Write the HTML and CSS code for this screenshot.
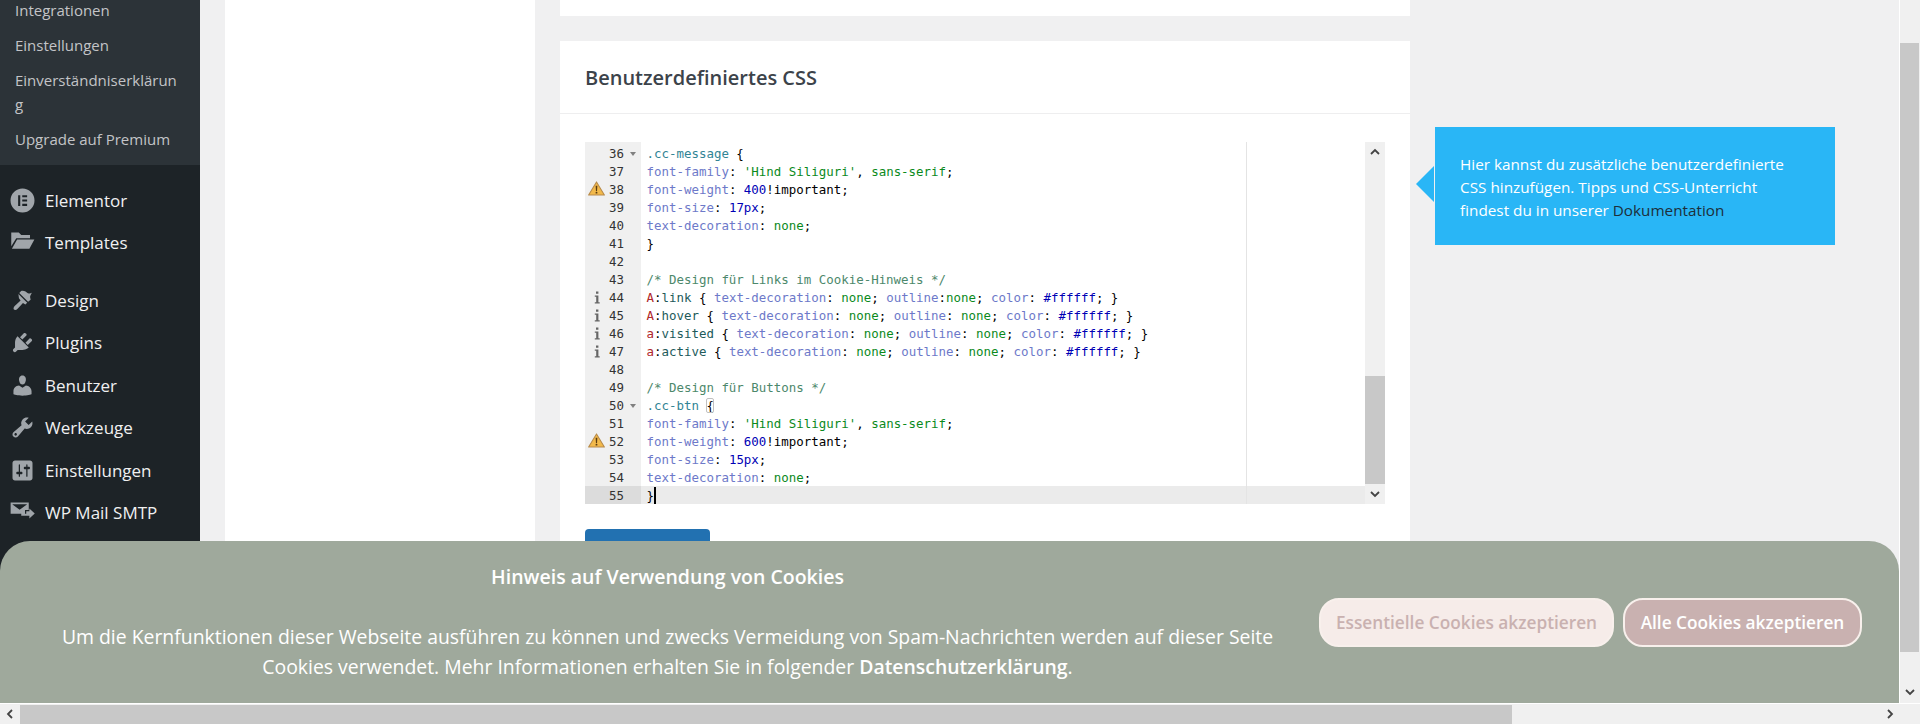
FILE: index.html
```html
<!DOCTYPE html>
<html lang="de">
<head>
  <meta charset="UTF-8">
  <title>Benutzerdefiniertes CSS</title>
  <link rel="stylesheet" href="styles.css">
</head>
<body>
  <div class="fenster">
    <div class="oben">
      <div class="haupt">
        <nav class="sidebar">
          <ul class="submenu">
            <li>Integrationen</li>
            <li>Einstellungen</li>
            <li class="umbruch">Einverständniserklärung</li>
            <li>Upgrade auf Premium</li>
          </ul>
          <ul class="menu menu-erste">
            <li>
              <svg viewBox="0 0 20 20"><path fill-rule="evenodd" d="M10 .4a9.6 9.6 0 1 0 0 19.200a9.600 9.600 0 0 0 0-19.200zM6.500 5.700h1.700v8.600H6.500zM9.800 5.700h3.900v1.700H9.800zM9.800 9.150h3.900v1.700H9.800zM9.800 12.600h3.900v1.700H9.800z"/></svg>
              Elementor
            </li>
            <li>
              <svg viewBox="0 0 20 20"><path d="M1 2h6l2 2h7v2.500H5L1 13zM5.700 7.500H19.500L15.500 15H1.500z"/></svg>
              Templates
            </li>
          </ul>
          <ul class="menu">
            <li>
              <svg viewBox="0 0 20 20"><path d="M14.480 11.060L7.410 3.990l1.500-1.500c.5-.56 2.300-.47 3.510.32 1.210.8 1.430 1.280 2.660 1.550 1.240.27 2.410-.48 2.410-.48s-.9 1.600-1.300 2.500c-.4 1 .3 1.900.3 3.100zM6.700 4.700l7.070 7.070-1.500 1.500-1.900-1.300-4.300 4.700c-.9 1-2.300 1.200-2.900.6-.6-.6-.4-2 .6-2.900l4.700-4.300-1.300-1.900z"/></svg>
              Design
            </li>
            <li>
              <svg viewBox="0 0 20 20"><path d="M13.110 4.360L9.870 7.600 8 5.730l3.240-3.240c.35-.34 1.050-.2 1.560.32.52.51.66 1.210.31 1.550zm-8 1.770l.91-1.120 9.010 9.010-1.190.84c-.71.71-2.630 1.160-3.820 1.160H6.140L4.900 17.260c-.59.59-1.540.59-2.120 0-.59-.58-.59-1.530 0-2.120l1.240-1.240v-3.880c0-1.130.4-3.190 1.090-3.890zm7.260 3.970l3.240-3.240c.34-.35 1.040-.21 1.550.31.52.51.66 1.210.31 1.550l-3.240 3.250z"/></svg>
              Plugins
            </li>
            <li>
              <svg viewBox="0 0 20 20"><path d="M10 9.250c-2.270 0-2.730-3.440-2.730-3.440C7 4.020 7.820 2 9.970 2c2.160 0 2.980 2.020 2.710 3.810 0 0-.41 3.440-2.680 3.440zm0 2.570L12.720 10c2.390 0 4.520 2.330 4.520 4.530v2.490s-3.650 1.130-7.240 1.130c-3.650 0-7.240-1.130-7.240-1.130v-2.490c0-2.250 1.940-4.480 4.470-4.480z"/></svg>
              Benutzer
            </li>
            <li>
              <svg viewBox="0 0 20 20"><path d="M16.680 9.770c-1.340 1.340-3.300 1.670-4.950.99l-5.410 6.520c-.99.99-2.590.99-3.580 0s-.99-2.590 0-3.570l6.520-5.420c-.68-1.650-.35-3.610.99-4.950 1.280-1.280 3.120-1.620 4.720-1.060l-2.890 2.890 2.820 2.820 2.860-2.870c.53 1.580.18 3.390-1.080 4.650zM3.810 16.210c.4.39 1.040.39 1.430 0 .4-.4.4-1.040 0-1.430-.39-.4-1.030-.4-1.430 0-.39.39-.39 1.030 0 1.430z"/></svg>
              Werkzeuge
            </li>
            <li>
              <svg viewBox="0 0 20 20"><path d="M18 16V4c0-1.100-.9-2-2-2H4c-1.100 0-2 .9-2 2v12c0 1.100.9 2 2 2h12c1.100 0 2-.9 2-2zM8 11h1c.55 0 1 .45 1 1s-.45 1-1 1H8v1.500c0 .28-.22.5-.5.5s-.5-.22-.5-.5V13H6c-.55 0-1-.45-1-1s.45-1 1-1h1V5.500c0-.28.22-.5.5-.5s.5.22.5.5V11zm5-2h-1c-.55 0-1-.45-1-1s.45-1 1-1h1V5.500c0-.28.22-.5.5-.5s.5.22.5.5V7h1c.55 0 1 .45 1 1s-.45 1-1 1h-1v5.500c0 .28-.22.5-.5.5s-.5-.22-.5-.5V9z"/></svg>
              Einstellungen
            </li>
            <li>
              <svg viewBox="0 0 20 20"><path fill-rule="evenodd" d="M.5 2h14.500v6h-3v3H.5zM2 3.500l5.700 4.200 5.800-4.200v-.2H2zM13 9h2.500V6.800l4.300 4-4.300 4v-2.300H9V11h4z"/></svg>
              WP Mail SMTP
            </li>
          </ul>
        </nav>

        <div class="panel"></div>

        <div class="inhalt">
          <div class="karte karte-vorher"></div>
          <div class="karte">
            <h2>Benutzerdefiniertes CSS</h2>
            <div class="karte-body">
              <div class="editor">
                <div class="zeilen">
                  <div class="zeile zeile-start"><div class="gutter"></div></div>
                  <div class="zeile"><div class="gutter"><b>36</b><i class="fold"></i></div><code><span class="k">.cc-message</span> {</code></div>
                  <div class="zeile"><div class="gutter"><b>37</b></div><code><span class="p">font-family</span>: <span class="s">'Hind Siliguri'</span>, <span class="s">sans-serif</span>;</code></div>
                  <div class="zeile"><div class="gutter"><svg class="warn" viewBox="0 0 16 14"><path d="M8 .8L15.400 13.200H.6z" fill="#f2b94a" stroke="#b78a4a" stroke-linejoin="round"/><path d="M7.200 4.500h1.600l-.3 5h-1zM7.200 10.300h1.600v1.500H7.200z" fill="#5a3b10"/></svg><b>38</b></div><code><span class="p">font-weight</span>: <span class="n">400</span>!important;</code></div>
                  <div class="zeile"><div class="gutter"><b>39</b></div><code><span class="p">font-size</span>: <span class="n">17px</span>;</code></div>
                  <div class="zeile"><div class="gutter"><b>40</b></div><code><span class="p">text-decoration</span>: <span class="s">none</span>;</code></div>
                  <div class="zeile"><div class="gutter"><b>41</b></div><code>}</code></div>
                  <div class="zeile"><div class="gutter"><b>42</b></div><code></code></div>
                  <div class="zeile"><div class="gutter"><b>43</b></div><code><span class="c">/* Design für Links im Cookie-Hinweis */</span></code></div>
                  <div class="zeile"><div class="gutter"><svg class="info" viewBox="0 0 6 13"><path d="M2 .5h2.400v2.300H2zM.8 4.500h3.600v6.700h1.300v1.300H.8v-1.300h1.400V5.800H.8z"/></svg><b>44</b></div><code><span class="t">A</span>:<span class="l">link</span> { <span class="p">text-decoration</span>: <span class="s">none</span>; <span class="p">outline</span>:<span class="s">none</span>; <span class="p">color</span>: <span class="n">#ffffff</span>; }</code></div>
                  <div class="zeile"><div class="gutter"><svg class="info" viewBox="0 0 6 13"><path d="M2 .5h2.400v2.300H2zM.8 4.500h3.600v6.700h1.300v1.300H.8v-1.300h1.400V5.800H.8z"/></svg><b>45</b></div><code><span class="t">A</span>:<span class="l">hover</span> { <span class="p">text-decoration</span>: <span class="s">none</span>; <span class="p">outline</span>: <span class="s">none</span>; <span class="p">color</span>: <span class="n">#ffffff</span>; }</code></div>
                  <div class="zeile"><div class="gutter"><svg class="info" viewBox="0 0 6 13"><path d="M2 .5h2.400v2.300H2zM.8 4.500h3.600v6.700h1.300v1.300H.8v-1.300h1.400V5.800H.8z"/></svg><b>46</b></div><code><span class="t">a</span>:<span class="l">visited</span> { <span class="p">text-decoration</span>: <span class="s">none</span>; <span class="p">outline</span>: <span class="s">none</span>; <span class="p">color</span>: <span class="n">#ffffff</span>; }</code></div>
                  <div class="zeile"><div class="gutter"><svg class="info" viewBox="0 0 6 13"><path d="M2 .5h2.400v2.300H2zM.8 4.500h3.600v6.700h1.300v1.300H.8v-1.300h1.400V5.800H.8z"/></svg><b>47</b></div><code><span class="t">a</span>:<span class="l">active</span> { <span class="p">text-decoration</span>: <span class="s">none</span>; <span class="p">outline</span>: <span class="s">none</span>; <span class="p">color</span>: <span class="n">#ffffff</span>; }</code></div>
                  <div class="zeile"><div class="gutter"><b>48</b></div><code></code></div>
                  <div class="zeile"><div class="gutter"><b>49</b></div><code><span class="c">/* Design für Buttons */</span></code></div>
                  <div class="zeile"><div class="gutter"><b>50</b><i class="fold"></i></div><code><span class="k">.cc-btn</span> <span class="klammer">{</span></code></div>
                  <div class="zeile"><div class="gutter"><b>51</b></div><code><span class="p">font-family</span>: <span class="s">'Hind Siliguri'</span>, <span class="s">sans-serif</span>;</code></div>
                  <div class="zeile"><div class="gutter"><svg class="warn" viewBox="0 0 16 14"><path d="M8 .8L15.400 13.200H.6z" fill="#f2b94a" stroke="#b78a4a" stroke-linejoin="round"/><path d="M7.200 4.500h1.600l-.3 5h-1zM7.200 10.300h1.600v1.500H7.200z" fill="#5a3b10"/></svg><b>52</b></div><code><span class="p">font-weight</span>: <span class="n">600</span>!important;</code></div>
                  <div class="zeile"><div class="gutter"><b>53</b></div><code><span class="p">font-size</span>: <span class="n">15px</span>;</code></div>
                  <div class="zeile"><div class="gutter"><b>54</b></div><code><span class="p">text-decoration</span>: <span class="s">none</span>;</code></div>
                  <div class="zeile zeile-aktiv"><div class="gutter"><b>55</b></div><code>}<span class="cursor"></span></code></div>
                  <div class="druckrand"></div>
                </div>
                <div class="editor-scroll">
                  <svg class="pfeil" viewBox="0 0 10 6"><path d="M1 5l4-4 4 4" /></svg>
                  <div class="editor-daumen"></div>
                  <svg class="pfeil" viewBox="0 0 10 6"><path d="M1 1l4 4 4-4" /></svg>
                </div>
              </div>
              <button class="speichern" type="button"></button>
            </div>
          </div>
        </div>

        <aside class="hinweis">
          Hier kannst du zusätzliche benutzerdefinierte<br>
          CSS hinzufügen. Tipps und CSS-Unterricht<br>
          findest du in unserer <a href="#">Dokumentation</a>
        </aside>

        <div class="cookie">
          <div class="cookie-text">
            <h3>Hinweis auf Verwendung von Cookies</h3>
            <p>Um die Kernfunktionen dieser Webseite ausführen zu können und zwecks Vermeidung von Spam-Nachrichten werden auf dieser Seite<br>
            Cookies verwendet. Mehr Informationen erhalten Sie in folgender <strong>Datenschutzerklärung</strong>.</p>
          </div>
          <div class="cookie-buttons">
            <button class="btn btn-hell" type="button">Essentielle Cookies akzeptieren</button>
            <button class="btn btn-rosa" type="button">Alle Cookies akzeptieren</button>
          </div>
        </div>
      </div>

      <div class="vscroll">
        <div class="vscroll-daumen"></div>
        <svg class="pfeil" viewBox="0 0 10 6"><path d="M1 1l4 4 4-4" /></svg>
      </div>
    </div>

    <div class="hscroll">
      <svg class="pfeil-h" viewBox="0 0 6 10"><path d="M5 1L1 5l4 4" /></svg>
      <div class="hscroll-daumen"></div>
      <svg class="pfeil-h" viewBox="0 0 6 10"><path d="M1 1l4 4-4 4" /></svg>
    </div>
  </div>
</body>
</html>
```

FILE: styles.css
```css
* {
  box-sizing: border-box;
}

body {
  margin: 0;
  font-family: 'Open Sans', 'Noto Sans', sans-serif;
  background-color: #f0f0f1;
  color: #3c434a;
  overflow: hidden;
}

.fenster {
  width: 1920px;
  height: 724px;
  display: flex;
  flex-direction: column;
}

.oben {
  flex: 1;
  display: flex;
  min-height: 0;
}

.haupt {
  position: relative;
  flex: 1;
  display: flex;
  overflow: hidden;
}

/* Sidebar */
.sidebar {
  width: 200px;
  background-color: #1d2327;
  flex-shrink: 0;
}

.sidebar ul {
  list-style: none;
  margin: 0;
}

.submenu {
  background-color: #2c3338;
  color: #c3c4c7;
  font-size: 15px;
  line-height: 24px;
  margin-top: -8px !important;
  padding: 0 0 9px 15px;
}

.submenu li {
  padding: 5.500px 0;
}

.submenu .umbruch {
  width: 165px;
  word-break: break-all;
}

.menu {
  color: #f0f0f1;
  font-size: 17px;
  padding: 0 0 15px;
}

.menu-erste {
  padding-top: 14px;
}

.menu li {
  height: 42.500px;
  display: flex;
  align-items: center;
  padding-left: 10px;
  gap: 10px;
}

.menu svg {
  width: 25px;
  height: 25px;
  fill: #a0a5aa;
  flex-shrink: 0;
}

/* Spalten */
.panel {
  width: 310px;
  margin-left: 25px;
  background-color: #fff;
  flex-shrink: 0;
}

.inhalt {
  width: 850px;
  margin-left: 25px;
  flex-shrink: 0;
}

.karte {
  background-color: #fff;
}

.karte-vorher {
  height: 16px;
  margin-bottom: 25px;
}

.karte h2 {
  margin: 0;
  height: 73px;
  padding: 1px 25px 0;
  font-size: 20px;
  font-weight: 600;
  line-height: 72px;
  color: #3c434a;
  border-bottom: 1px solid #eeeeef;
}

.karte-body {
  padding: 28px 25px 60px;
}

/* Code-Editor */
.editor {
  display: flex;
  height: 362px;
  background-color: #fff;
  font-family: 'DejaVu Sans Mono', monospace;
  font-size: 12.450px;
  line-height: 18px;
  color: #000;
}

.zeilen {
  position: relative;
  flex: 1;
}

.zeile {
  display: flex;
  height: 18px;
}

.zeile-start {
  height: 2px;
}

.gutter {
  width: 56px;
  height: 100%;
  display: flex;
  align-items: center;
  padding: 1px 0 0 24px;
  background-color: #f0f0f0;
  position: relative;
  flex-shrink: 0;
}

.gutter b {
  font-weight: normal;
  color: #333;
}

.zeile code {
  font: inherit;
  padding: 1px 0 0 5.500px;
  white-space: pre;
  flex: 1;
}

.zeile-aktiv {
  background-color: #ebebeb;
  position: relative;
}

.zeile-aktiv .gutter {
  background-color: #dcdcdc;
}

.fold {
  width: 0;
  height: 0;
  margin-left: 6px;
  border-left: 3px solid transparent;
  border-right: 3px solid transparent;
  border-top: 4px solid #808080;
}

.warn {
  position: absolute;
  left: 3px;
  top: 1px;
  width: 17px;
  height: 15px;
}

.info {
  position: absolute;
  left: 9px;
  top: 3px;
  width: 6px;
  height: 13px;
  fill: #666;
}

.druckrand {
  position: absolute;
  top: 0;
  bottom: 0;
  left: 661px;
  width: 1px;
  background-color: #e4e4e4;
}

.p { color: #6d79c9; }
.s { color: #0b8a1c; }
.n { color: #0000b5; }
.c { color: #4c886b; }
.k { color: #318495; }
.t { color: #b0272a; }
.l { color: #225a5a; }

.klammer {
  outline: 1px solid #c0c0c0;
  outline-offset: -1px;
  border-radius: 2px;
}

.cursor {
  display: inline-block;
  width: 1.500px;
  height: 17px;
  background-color: #000;
  vertical-align: top;
}

.editor-scroll {
  width: 20px;
  display: flex;
  flex-direction: column;
  background-color: #f0f0f0;
  position: relative;
}

.editor-daumen {
  height: 108px;
  margin-top: auto;
  background-color: #c8c8c8;
}

.pfeil {
  width: 20px;
  height: 20px;
  padding: 6px 5px;
  flex-shrink: 0;
}

.pfeil-h {
  width: 20px;
  height: 20px;
  padding: 5px 6px;
  flex-shrink: 0;
}

.pfeil path,
.pfeil-h path {
  fill: none;
  stroke: #444;
  stroke-width: 1.800;
}

.speichern {
  display: block;
  width: 125px;
  height: 40px;
  margin-top: 25px;
  border: 0;
  border-radius: 4px;
  background-color: #2271b1;
}

/* Hinweis-Box */
.hinweis {
  position: relative;
  align-self: flex-start;
  width: 400px;
  margin: 127px 0 0 25px;
  padding: 26px 25px 23px;
  background-color: #29b6f6;
  color: #fff;
  font-size: 15.300px;
  line-height: 23px;
  flex-shrink: 0;
}

.hinweis::before {
  content: "";
  position: absolute;
  left: -19px;
  top: 39px;
  border-top: 18px solid transparent;
  border-bottom: 18px solid transparent;
  border-right: 18px solid #29b6f6;
}

.hinweis a {
  color: #1d2f3a;
  text-decoration: none;
}

/* Cookie-Banner */
.cookie {
  position: absolute;
  left: 0;
  right: 0;
  bottom: 0;
  height: 162px;
  display: flex;
  align-items: center;
  padding: 0 37px 0 16px;
  background-color: #9fa99c;
  border-radius: 30px 30px 0 0;
  color: #fff;
}

.cookie-text {
  width: 1303px;
  flex-shrink: 0;
  text-align: center;
}

.cookie-text h3 {
  margin: 0 0 30px;
  font-size: 19.500px;
  font-weight: 600;
  line-height: 30px;
}

.cookie-text p {
  margin: 0;
  font-size: 19.400px;
  line-height: 30px;
}

.cookie-text strong {
  font-weight: 600;
}

.cookie-buttons {
  display: flex;
  margin-left: auto;
  gap: 9px;
  flex-shrink: 0;
}

.btn {
  height: 49px;
  width: 295px;
  padding: 0;
  border: 2px solid #f8f0ec;
  border-radius: 20px;
  font-family: inherit;
  font-size: 17.250px;
  font-weight: 600;
  white-space: nowrap;
}

.btn-hell {
  background-color: #f6ece9;
  color: #c9b1b0;
}

.btn-rosa {
  width: 239px;
  background-color: #c9b1b0;
  color: #fff;
}

/* Browser-Scrollbars */
.vscroll {
  width: 21px;
  display: flex;
  flex-direction: column;
  justify-content: space-between;
  align-items: flex-start;
  padding-top: 43px;
  padding-bottom: 1px;
  border-left: 1px solid #fff;
  background-color: #f0f0f0;
}

.vscroll-daumen {
  width: 19px;
  height: 609px;
  background-color: #c8c8c8;
}

.hscroll {
  height: 21px;
  display: flex;
  align-items: center;
  background-color: #f0f0f0;
  border-top: 1px solid #fff;
  padding-right: 20px;
}

.hscroll-daumen {
  width: 1492px;
  height: 19px;
  margin-right: auto;
  background-color: #c8c8c8;
}
```
